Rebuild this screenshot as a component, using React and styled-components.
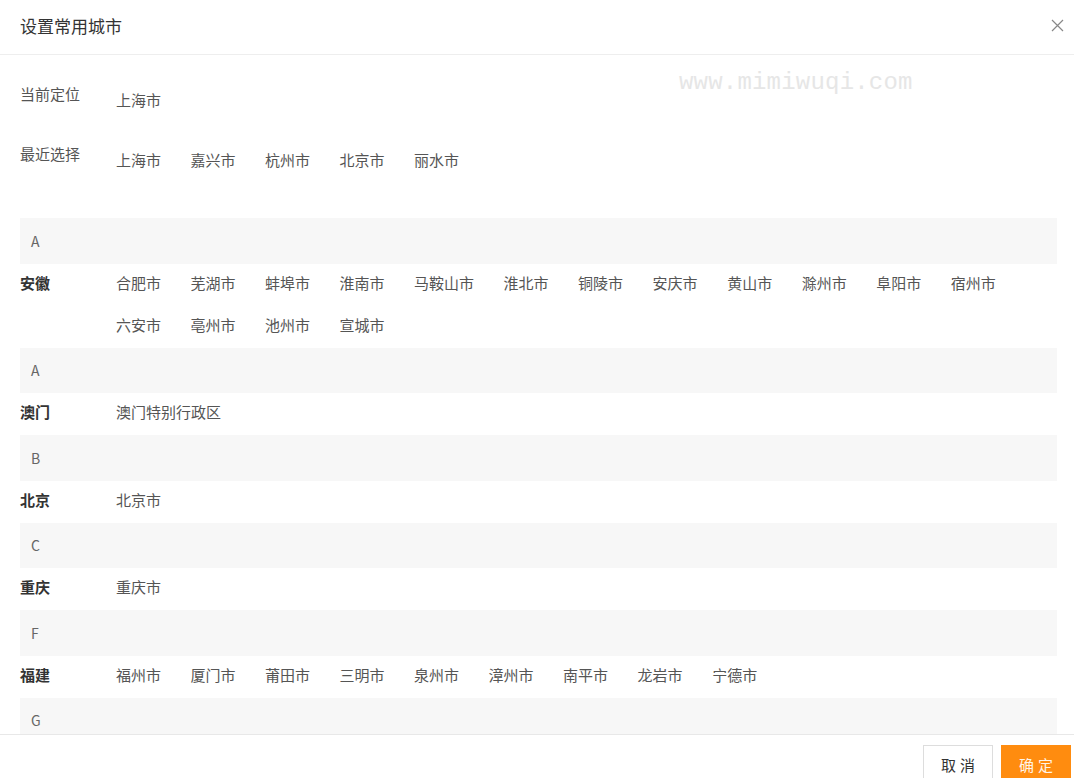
import React from 'react';
import styled, { createGlobalStyle } from 'styled-components';

const GlobalStyle = createGlobalStyle`
    html, body {
        margin: 0;
        padding: 0;
        background: #fff;
        overflow: hidden;
    }
    body {
        font-family: "Noto Sans CJK SC", "Noto Sans", sans-serif;
        color: #333;
    }
`

const Dialog = styled.div`
    width: 1074px;
    height: 778px;
    display: flex;
    flex-direction: column;
    background: #fff;
    overflow: hidden;
`

const Header = styled.div`
    height: 55px;
    flex: none;
    display: flex;
    align-items: center;
    justify-content: space-between;
    padding: 0 10px 3px 20px;
    box-sizing: border-box;
    border-bottom: 1px solid #eeeeee;
`

const Title = styled.div`
    font-size: 17px;
    color: #333;
`

const CloseButton = styled.button`
    width: 14px;
    height: 14px;
    padding: 0;
    border: 0;
    background: transparent;
    cursor: pointer;
    display: flex;
    align-items: center;
    justify-content: center;
`

const Body = styled.div`
    position: relative;
    height: 679px;
    flex: none;
    overflow: hidden;
    padding: 29px 17px 0 20px;
    box-sizing: border-box;
`

const Watermark = styled.div`
    position: absolute;
    left: 679px;
    top: 14px;
    font-family: "Liberation Mono", monospace;
    font-size: 24px;
    color: #e6e6e6;
    letter-spacing: 0.2px;
    pointer-events: none;
`

const Quick = styled.div`
    margin-bottom: 14px;
`

const InfoRow = styled.div`
    display: flex;
    align-items: flex-start;
    height: 60px;
`

const InfoLabel = styled.div`
    width: 96px;
    flex: none;
    font-size: 15px;
    line-height: 20px;
    color: #555;
`

const InfoValues = styled.div`
    display: flex;
    padding-top: 6px;
`

const City = styled.span`
    font-size: 15px;
    line-height: ${p => p.$line || 20}px;
    height: ${p => p.$height || 20}px;
    margin-right: 29.5px;
    color: #555;
    white-space: nowrap;
    cursor: pointer;
`

const LetterBar = styled.div`
    height: 45.5px;
    background: #f7f7f7;
    padding-left: 11px;
    display: flex;
    align-items: center;
    font-size: 14px;
    color: #666;
`

const ProvinceRow = styled.div`
    display: flex;
    align-items: flex-start;
`

const Province = styled.div`
    width: 96px;
    flex: none;
    font-size: 15px;
    font-weight: bold;
    line-height: 38px;
    color: #333;
`

const CityList = styled.div`
    flex: 1;
    display: flex;
    flex-wrap: wrap;
`

const Footer = styled.div`
    flex: 1;
    display: flex;
    justify-content: flex-end;
    align-items: flex-start;
    padding: 10px 3px 0 0;
    border-top: 1px solid #e8e8e8;
    gap: 8px;
`

const Button = styled.button`
    width: 70px;
    height: 38px;
    box-sizing: border-box;
    font-family: "Noto Sans CJK SC", sans-serif;
    font-size: 15px;
    letter-spacing: 4px;
    padding: 0 0 0 4px;
    border: 1px solid ${p => (p.$primary ? '#ff8c0f' : '#dddddd')};
    background: ${p => (p.$primary ? '#ff8c0f' : '#fff')};
    color: ${p => (p.$primary ? '#fff4e6' : '#333')};
    cursor: pointer;
`

const groups = [
    { letter: 'A', name: '安徽', cities: ['合肥市', '芜湖市', '蚌埠市', '淮南市', '马鞍山市', '淮北市', '铜陵市', '安庆市', '黄山市', '滁州市', '阜阳市', '宿州市', '六安市', '亳州市', '池州市', '宣城市'] },
    { letter: 'A', name: '澳门', cities: ['澳门特别行政区'] },
    { letter: 'B', name: '北京', cities: ['北京市'] },
    { letter: 'C', name: '重庆', cities: ['重庆市'] },
    { letter: 'F', name: '福建', cities: ['福州市', '厦门市', '莆田市', '三明市', '泉州市', '漳州市', '南平市', '龙岩市', '宁德市'] },
];

const recent = ['上海市', '嘉兴市', '杭州市', '北京市', '丽水市'];

const CloseIcon = () => (
    <svg width="13" height="13" viewBox="0 0 13 13">
        <path d="M1 1L12 12M12 1L1 12" stroke="#888" strokeWidth="1.2" fill="none" />
    </svg>
);

const App = () => (
    <>
        <GlobalStyle />
        <Dialog>
            <Header>
                <Title>设置常用城市</Title>
                <CloseButton aria-label="关闭"><CloseIcon /></CloseButton>
            </Header>
            <Body>
                <Watermark>www.mimiwuqi.com</Watermark>
                <Quick>
                    <InfoRow>
                        <InfoLabel>当前定位</InfoLabel>
                        <InfoValues>
                            <City>上海市</City>
                        </InfoValues>
                    </InfoRow>
                    <InfoRow>
                        <InfoLabel>最近选择</InfoLabel>
                        <InfoValues>
                            {recent.map(c => <City key={c}>{c}</City>)}
                        </InfoValues>
                    </InfoRow>
                </Quick>
                {groups.map(g => (
                    <div key={g.name}>
                        <LetterBar>{g.letter}</LetterBar>
                        <ProvinceRow>
                            <Province>{g.name}</Province>
                            <CityList>
                                {g.cities.map(c => (
                                    <City key={c} $line={38} $height={42}>{c}</City>
                                ))}
                            </CityList>
                        </ProvinceRow>
                    </div>
                ))}
                <LetterBar>G</LetterBar>
            </Body>
            <Footer>
                <Button>取消</Button>
                <Button $primary>确定</Button>
            </Footer>
        </Dialog>
    </>
);

export default App;
